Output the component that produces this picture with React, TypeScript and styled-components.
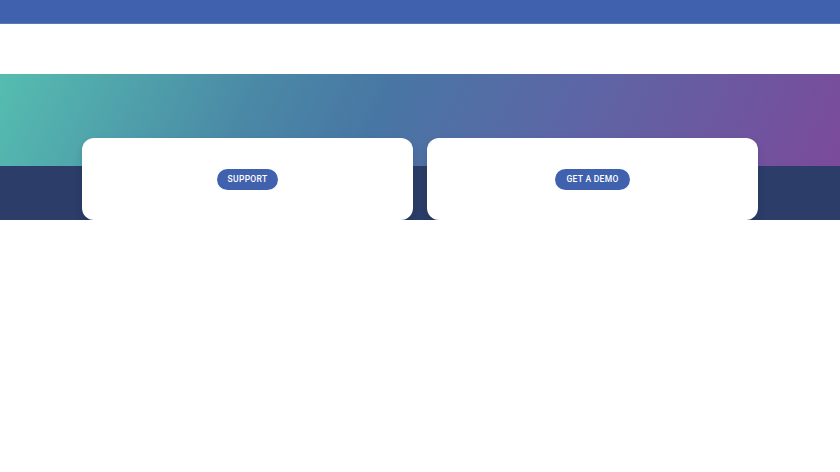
import styled, { createGlobalStyle } from "styled-components";

const GlobalStyle = createGlobalStyle`
  body {
    margin: 0;
    font-family: Roboto, "Liberation Sans", sans-serif;
    background: #fff;
  }
`;

const TopBar = styled.div`
  height: 24px;
  background: #4061ad;
  border-bottom: 1px solid #5a78b8;
  box-sizing: border-box;
`;

const NavSpace = styled.div`
  height: 50px;
  background: #fff;
`;

const Hero = styled.section`
  height: 146px;
  box-sizing: border-box;
  padding: 64px 82px 0;
  background:
    linear-gradient(115deg, #55bdb0 0%, #4a88a6 30%, #4876a4 45%, #5b67a6 65%, #7b4a9b 100%) top / 100% 92px no-repeat,
    #2b3d68;
  display: grid;
  grid-template-columns: 1fr 1fr;
  gap: 14px;
`;

const Card = styled.div`
  position: relative;
  background: #fff;
  border-radius: 12px;
  height: 82px;
  display: flex;
  align-items: center;
  justify-content: center;
  box-shadow: 0 4px 8px rgba(0, 0, 0, 0.12);

  /* soft drop shadow under the card */
  &::after {
    content: "";
    position: absolute;
    left: 8px;
    right: 8px;
    top: 100%;
    height: 7px;
    border-radius: 0 0 50% 50% / 0 0 100% 100%;
    background: linear-gradient(to bottom, rgba(0, 0, 0, 0.14), rgba(0, 0, 0, 0));
    pointer-events: none;
  }
`;

const PillButton = styled.button`
  height: 21px;
  padding: 0 11px;
  border: none;
  border-radius: 11px;
  background: #4061ad;
  color: #fff;
  font-family: Roboto, sans-serif;
  font-size: 8.5px;
  font-weight: 500;
  letter-spacing: 0.3px;
  text-transform: uppercase;
  cursor: pointer;
`;

export default function App() {
  return (
    <>
      <GlobalStyle />
      <TopBar />
      <NavSpace />
      <Hero>
        <Card>
          <PillButton>Support</PillButton>
        </Card>
        <Card>
          <PillButton>Get a demo</PillButton>
        </Card>
      </Hero>
    </>
  );
}
